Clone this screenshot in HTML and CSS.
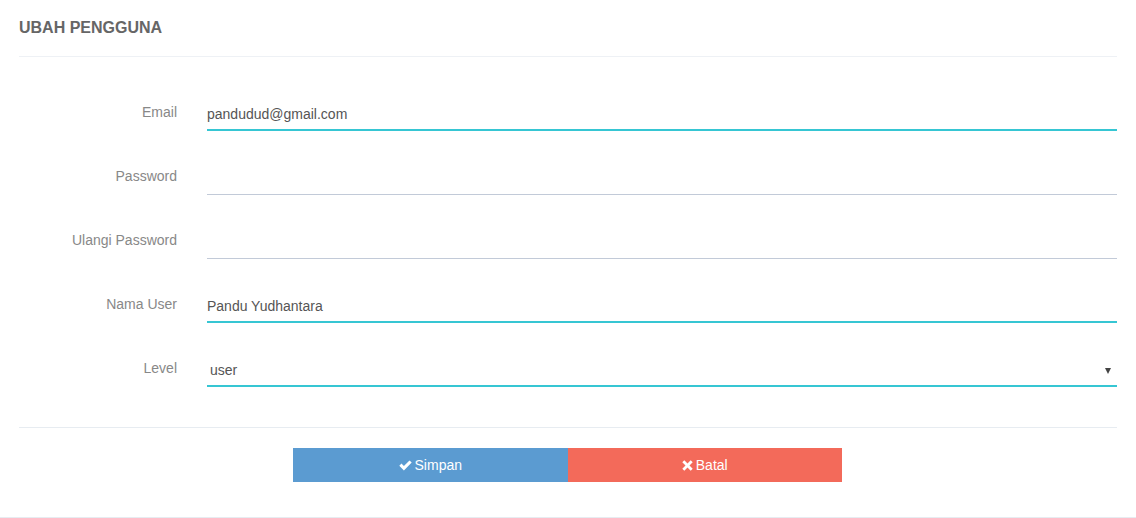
FILE: index.html
```html
<!DOCTYPE html>
<html lang="id">
<head>
<meta charset="utf-8">
<title>Ubah Pengguna</title>
<link rel="stylesheet" href="styles.css">
</head>
<body>
<div class="portlet">
  <div class="portlet-title">
    <span class="caption">UBAH PENGGUNA</span>
  </div>
  <form class="form">
    <div class="form-body">
      <div class="form-row">
        <label class="label" for="email">Email</label>
        <input class="field filled" id="email" type="text" value="pandudud@gmail.com">
      </div>
      <div class="form-row">
        <label class="label" for="pass">Password</label>
        <input class="field" id="pass" type="password" value="">
      </div>
      <div class="form-row">
        <label class="label" for="pass2">Ulangi Password</label>
        <input class="field" id="pass2" type="password" value="">
      </div>
      <div class="form-row">
        <label class="label" for="nama">Nama User</label>
        <input class="field filled" id="nama" type="text" value="Pandu Yudhantara">
      </div>
      <div class="form-row">
        <label class="label" for="level">Level</label>
        <div class="select-wrap">
          <select class="field filled select" id="level">
            <option>user</option>
            <option>admin</option>
          </select>
          <span class="caret"></span>
        </div>
      </div>
    </div>
    <div class="form-actions">
      <div class="btn-group">
        <button type="button" class="btn btn-blue">
          <svg class="icon" width="13" height="11" viewBox="0 0 13 11"><path d="M0.3 5.8 L2.5 3.6 L4.9 6 L10.5 0.4 L12.7 2.6 L4.9 10.4 Z" fill="#fff"/></svg>
          Simpan
        </button>
        <button type="button" class="btn btn-red">
          <svg class="icon" width="11" height="11" viewBox="0 0 11 11"><path d="M2.3 0.3 L5.5 3.5 L8.7 0.3 L10.7 2.3 L7.5 5.5 L10.7 8.7 L8.7 10.7 L5.5 7.5 L2.3 10.7 L0.3 8.7 L3.5 5.5 L0.3 2.3 Z" fill="#fff"/></svg>
          Batal
        </button>
      </div>
    </div>
  </form>
</div>
<div class="page-bottom"></div>
</body>
</html>
```

FILE: styles.css
```css
html, body {
  margin: 0;
  padding: 0;
  background: #fff;
}
body {
  font-family: "Liberation Sans", Arial, sans-serif;
  font-size: 14px;
  color: #555;
}
.portlet {
  padding: 0 19px;
}
.portlet-title {
  padding: 18px 0 18px;
  line-height: 20px;
  border-bottom: 1px solid #eef1f5;
}
.caption {
  font-size: 16px;
  font-weight: bold;
  color: #666;
}
.form-body {
  padding: 40px 0 40px;
  display: flex;
  flex-direction: column;
  gap: 30px;
}
.form-row {
  display: flex;
  align-items: flex-start;
}
.label {
  width: 158px;
  flex: none;
  text-align: right;
  color: #888;
  line-height: 20px;
  padding-top: 5px;
  margin-right: 30px;
}
.field {
  flex: 1;
  min-width: 0;
  height: 34px;
  box-sizing: border-box;
  border: 0;
  border-bottom: 1px solid #c2cad8;
  padding: 0;
  margin: 0;
  font-family: "Liberation Sans", Arial, sans-serif;
  font-size: 14px;
  color: #555;
  background: transparent;
  outline: none;
  border-radius: 0;
}
.field.filled {
  border-bottom: 2px solid #36c6d3;
  padding-top: 2px;
}
.select-wrap {
  flex: 1;
  position: relative;
  display: flex;
}
.select {
  width: 100%;
  -webkit-appearance: none;
  appearance: none;
  padding-left: 3px;
  cursor: pointer;
}
.caret {
  position: absolute;
  right: 6px;
  top: 15px;
  width: 0;
  height: 0;
  border-left: 3px solid transparent;
  border-right: 3px solid transparent;
  border-top: 6px solid #444;
  pointer-events: none;
}
.form-actions {
  border-top: 1px solid #e7ecf1;
  padding: 20px 0 35px;
}
.btn-group {
  width: 549px;
  margin: 0 0 0 274px;
  display: flex;
}
.btn {
  flex: 1;
  height: 34px;
  border: 0;
  margin: 0;
  border-radius: 0;
  color: #fff;
  font-family: "Liberation Sans", Arial, sans-serif;
  font-size: 14px;
  display: flex;
  align-items: center;
  justify-content: center;
  gap: 3px;
  cursor: pointer;
}
.btn-blue {
  background: #5b9bd1;
}
.btn-red {
  background: #f36a5a;
}
.icon {
  display: block;
}
.page-bottom {
  border-top: 1px solid #e7ecf1;
}
```
